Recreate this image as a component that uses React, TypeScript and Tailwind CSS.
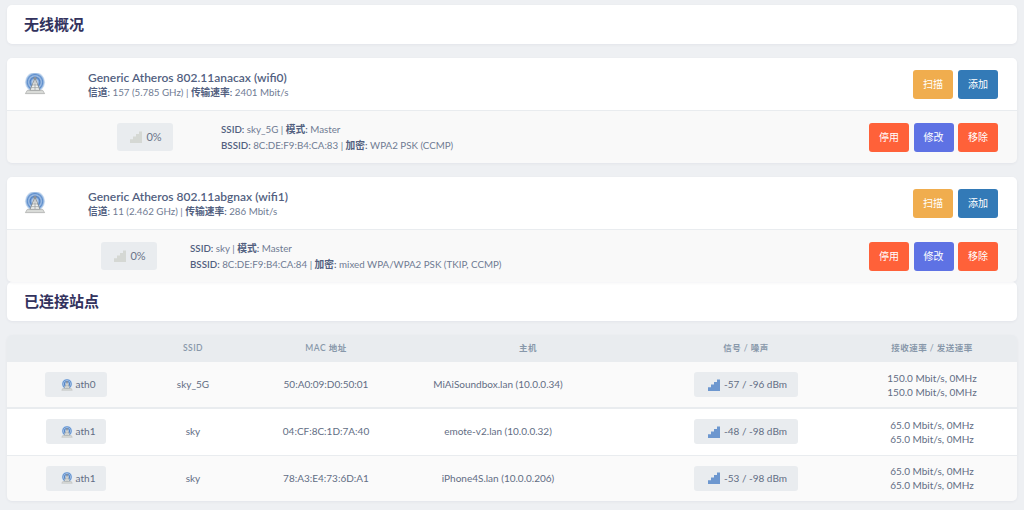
const FONT = "font-['Lato','Noto_Sans_CJK_SC',sans-serif]"

// Antenna icon, drawn since neither icon package has this tango-style one
function AntennaIcon({ size = 22 }: { size?: number }) {
  const id = `halo${size}`
  return (
    <svg width={size} height={size} viewBox="0 0 24 24" className="shrink-0">
      <defs>
        <radialGradient id={id} cx="50%" cy="50%" r="50%">
          <stop offset="0%" stopColor="#f2f6fb" />
          <stop offset="30%" stopColor="#a9c4e6" />
          <stop offset="48%" stopColor="#4d80c4" />
          <stop offset="62%" stopColor="#a5c1e4" />
          <stop offset="76%" stopColor="#5f8fcd" />
          <stop offset="90%" stopColor="#b4cdea" />
          <stop offset="100%" stopColor="#dfe9f5" />
        </radialGradient>
      </defs>
      <circle cx="12" cy="10" r="11" fill={`url(#${id})`} />
      <path d="M12 5.5 L6.5 19 H17.5 Z" fill="#eef0ee" stroke="#8d9092" strokeWidth="1" />
      <path d="M9 13 L15 13 M8 16 L16 16 M12 6 V19" stroke="#9a9d9f" strokeWidth="0.8" fill="none" />
      <circle cx="12" cy="5.8" r="1.8" fill="#8b929b" />
      <path d="M3.5 19 H20.5 L22.5 22.5 H1.5 Z" fill="#d9dbd8" stroke="#a2a5a3" strokeWidth="0.7" />
    </svg>
  )
}

function SignalIcon({ active = true }: { active?: boolean }) {
  const c = active ? '#6d97cf' : '#d5d8d4'
  return (
    <svg width="12" height="12" viewBox="0 0 12 12" className="shrink-0">
      <path d="M0 8.2h3V12H0zM3 5.6h3V12H3zM6 3h3v9H6zM9 .6h3V12H9z" fill={c} />
    </svg>
  )
}

function Btn({ label, color }: { label: string; color: string }) {
  return (
    <button className={`w-10 h-[29px] rounded-[3px] text-[10px] text-white ${color}`}>{label}</button>
  )
}

const Title = ({ text }: { text: string }) => (
  <div className="h-[39px] bg-white rounded-[5px] flex items-center pl-[17px] shadow-[0_1px_3px_rgba(50,50,93,0.06)]">
    <h3 className="text-[15px] font-bold text-[#32325d]">{text}</h3>
  </div>
)

type Radio = {
  name: string
  channel: string
  rate: string
  ssid: string
  bssid: string
  enc: string
  badgeClass: string
  infoClass: string
}

const radios: Radio[] = [
  {
    name: 'Generic Atheros 802.11anacax (wifi0)',
    channel: '157 (5.785 GHz)',
    rate: '2401 Mbit/s',
    ssid: 'sky_5G',
    bssid: '8C:DE:F9:B4:CA:83',
    enc: 'WPA2 PSK (CCMP)',
    badgeClass: 'ml-[110px]',
    infoClass: 'ml-[48px]',
  },
  {
    name: 'Generic Atheros 802.11abgnax (wifi1)',
    channel: '11 (2.462 GHz)',
    rate: '286 Mbit/s',
    ssid: 'sky',
    bssid: '8C:DE:F9:B4:CA:84',
    enc: 'mixed WPA/WPA2 PSK (TKIP, CCMP)',
    badgeClass: 'ml-[94px]',
    infoClass: 'ml-[33px]',
  },
]

function RadioCard({ r }: { r: Radio }) {
  return (
    <div className="rounded-[5px] overflow-hidden shadow-[0_1px_3px_rgba(50,50,93,0.06)]">
      <div className="h-[52px] bg-white flex items-center pl-[17px] pr-[19px] border-b border-[#e9ecef] box-content">
        <div className="w-[64px]"><AntennaIcon /></div>
        <div className="flex-1">
          <div className="text-[12px] leading-[15px] font-semibold text-[#525f7f]">{r.name}</div>
          <div className="text-[9.75px] leading-[14px] text-[#6f7b93]">
            <b className="font-semibold text-[#525f7f]">信道:</b> {r.channel} | <b className="font-semibold text-[#525f7f]">传输速率:</b> {r.rate}
          </div>
        </div>
        <div className="flex gap-[5px]">
          <Btn label="扫描" color="bg-[#f0ad4e]" />
          <Btn label="添加" color="bg-[#337ab7]" />
        </div>
      </div>
      <div className="h-[52px] bg-[#f9f9f9] flex items-center pr-[19px]">
        <div className={`${r.badgeClass} w-14 h-[28px] pl-[2px] bg-[#e9ecef] rounded-[3px] flex items-center justify-center gap-[4px] text-[11px] text-[#6a7489]`}>
          <SignalIcon active={false} />
          0%
        </div>
        <div className={`${r.infoClass} flex-1 text-[9.75px] leading-[16px] text-[#6f7b93]`}>
          <div><b className="font-semibold text-[#525f7f]">SSID:</b> {r.ssid} | <b className="font-semibold text-[#525f7f]">模式:</b> Master</div>
          <div><b className="font-semibold text-[#525f7f]">BSSID:</b> {r.bssid} | <b className="font-semibold text-[#525f7f]">加密:</b> {r.enc}</div>
        </div>
        <div className="flex gap-[4.5px]">
          <Btn label="停用" color="bg-[#ff6139]" />
          <Btn label="修改" color="bg-[#5e72e4]" />
          <Btn label="移除" color="bg-[#ff6139]" />
        </div>
      </div>
    </div>
  )
}

const stations = [
  { iface: 'ath0', ssid: 'sky_5G', mac: '50:A0:09:D0:50:01', host: 'MiAiSoundbox.lan (10.0.0.34)', sig: '-57 / -96 dBm', rate: '150.0 Mbit/s, 0MHz', bg: 'bg-[#fafafa]', h: 'h-[46px]', w: 'w-[62px]', border: 'border-b-2 border-[#e9ecef]' },
  { iface: 'ath1', ssid: 'sky', mac: '04:CF:8C:1D:7A:40', host: 'emote-v2.lan (10.0.0.32)', sig: '-48 / -98 dBm', rate: '65.0 Mbit/s, 0MHz', bg: 'bg-white', h: 'h-[47px]', w: 'w-[60px]', border: 'border-b border-[#e9ecef]' },
  { iface: 'ath1', ssid: 'sky', mac: '78:A3:E4:73:6D:A1', host: 'iPhone4S.lan (10.0.0.206)', sig: '-53 / -98 dBm', rate: '65.0 Mbit/s, 0MHz', bg: 'bg-[#fafafa]', h: 'h-[46px]', w: 'w-[60px]', border: '' },
]

export default function App() {
  return (
    <div className={`${FONT} min-h-[510px] bg-[#eef0f3] px-[7px] pt-[5px] pb-[9px]`}>
      <Title text="无线概况" />
      <div className="mt-[14px] flex flex-col gap-[14px]">
        {radios.map(r => <RadioCard key={r.name} r={r} />)}
      </div>
      <Title text="已连接站点" />
      <div className="mt-[14px] rounded-[5px] overflow-hidden shadow-[0_1px_3px_rgba(50,50,93,0.06)]">
        <table className="w-full table-fixed border-collapse text-[10px] text-[#626d84] text-center">
          <colgroup>
            <col className="w-[138px]" />
            <col className="w-[96px]" />
            <col className="w-[170px]" />
            <col className="w-[234px]" />
            <col className="w-[202px]" />
            <col className="w-[170px]" />
          </colgroup>
          <thead>
            <tr className="h-[27px] bg-[#e9ecef] text-[8.5px] font-semibold tracking-[0.5px] text-[#8898aa]">
              <th></th>
              <th className="font-semibold">SSID</th>
              <th className="font-semibold">MAC 地址</th>
              <th className="font-semibold">主机</th>
              <th className="font-semibold">信号 / 噪声</th>
              <th className="font-semibold">接收速率 / 发送速率</th>
            </tr>
          </thead>
          <tbody>
            {stations.map(s => (
              <tr key={s.mac} className={`${s.h} ${s.bg} ${s.border}`}>
                <td>
                  <span className={`inline-flex items-center justify-center gap-[3px] h-[25px] pl-[4px] ${s.w} bg-[#e9ecef] rounded-[3px]`}>
                    <AntennaIcon size={12} />
                    {s.iface}
                  </span>
                </td>
                <td>{s.ssid}</td>
                <td>{s.mac}</td>
                <td className="pr-[60px]">{s.host}</td>
                <td>
                  <span className="inline-flex items-center justify-center gap-[4px] h-[25px] pl-[3px] w-[104px] bg-[#e9ecef] rounded-[3px]">
                    <SignalIcon />
                    {s.sig}
                  </span>
                </td>
                <td className="leading-[14px]">{s.rate}<br />{s.rate}</td>
              </tr>
            ))}
          </tbody>
        </table>
      </div>
    </div>
  )
}
